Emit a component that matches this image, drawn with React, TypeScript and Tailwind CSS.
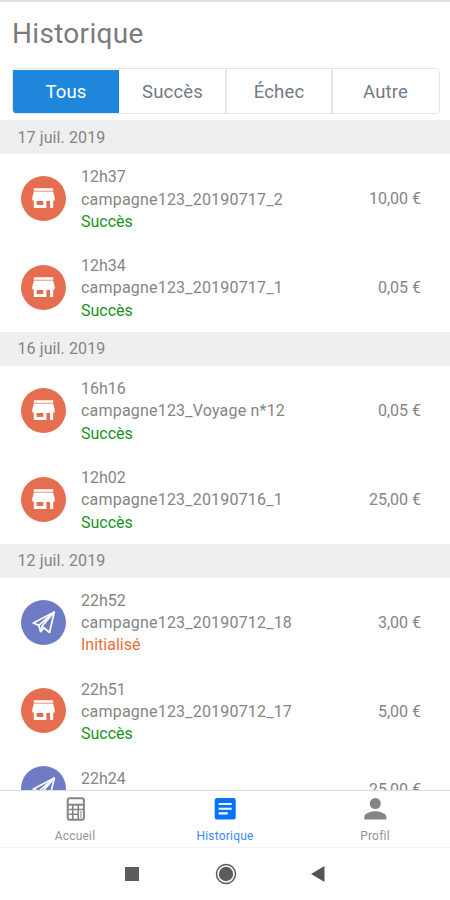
type Kind = 'store' | 'plane';
type Entry = { time: string; label?: string; status?: string; amount: string; kind: Kind };

const days: { date: string; entries: Entry[] }[] = [
  {
    date: '17 juil. 2019',
    entries: [
      { time: '12h37', label: 'campagne123_20190717_2', status: 'Succès', amount: '10,00 €', kind: 'store' },
      { time: '12h34', label: 'campagne123_20190717_1', status: 'Succès', amount: '0,05 €', kind: 'store' },
    ],
  },
  {
    date: '16 juil. 2019',
    entries: [
      { time: '16h16', label: 'campagne123_Voyage n*12', status: 'Succès', amount: '0,05 €', kind: 'store' },
      { time: '12h02', label: 'campagne123_20190716_1', status: 'Succès', amount: '25,00 €', kind: 'store' },
    ],
  },
  {
    date: '12 juil. 2019',
    entries: [
      { time: '22h52', label: 'campagne123_20190712_18', status: 'Initialisé', amount: '3,00 €', kind: 'plane' },
      { time: '22h51', label: 'campagne123_20190712_17', status: 'Succès', amount: '5,00 €', kind: 'store' },
      { time: '22h24', amount: '25,00 €', kind: 'plane' },
    ],
  },
];

const StoreIcon = () => (
  <svg viewBox="0 0 45 45" className="size-full" fill="#fff">
    <path d="M12.800 12.300h19.400v2.500H12.800z" />
    <path d="M12.800 14.800h19.400v1.200H12.800z" opacity=".45" />
    <path fillRule="evenodd" d="M12.800 16h19.400l1.500 5.500v3h-1.500v7.500h-3.200v-7h-3.600V32H12.800v-7.500h-1.500v-3zM15.600 25v4h6.700v-4z" />
  </svg>
);

const PlaneIcon = () => (
  <svg viewBox="0 0 45 45" className="size-full" fill="none" stroke="#fff" strokeWidth="1.700" strokeLinejoin="round">
    <path d="M33.300 12L12.300 23l5.500 2.400 1.800 6.200 3.600-3.600 5.300 4.500z" />
    <path d="M33.300 12L17.800 25.400M33.300 12L20.800 26.500l2.400 1.500M19.600 31.600l1.200-5.100" />
  </svg>
);

function Row({ entry }: { entry: Entry }) {
  return (
    <div className="flex items-center py-[11px] pl-[21px] pr-[29px]">
      <div className={`size-[45px] shrink-0 overflow-hidden rounded-full ${entry.kind === 'store' ? 'bg-[#e56e51]' : 'bg-[#6e7cc5]'}`}>
        {entry.kind === 'store' ? <StoreIcon /> : <PlaneIcon />}
      </div>
      <div className="-mb-[1.300px] ml-[15px] mt-[1.300px] min-h-[44.600px] flex-1 whitespace-nowrap text-[16px] leading-[22.300px]">
        <div>{entry.time}</div>
        {entry.label && <div className="tracking-[0.2px]">{entry.label}</div>}
        {entry.status && (
          <div className={entry.status === 'Initialisé' ? 'text-[#e8703a]' : 'text-[#159424]'}>{entry.status}</div>
        )}
      </div>
      <div className="-mb-px mt-px text-[16px] leading-[22px]">{entry.amount}</div>
    </div>
  );
}

export default function App() {
  return (
    <div className="flex h-[900px] w-[450px] flex-col overflow-hidden border-t-2 border-[#dedede] bg-white font-['Roboto',sans-serif] text-[#858585]">
      <header className="h-[118px] shrink-0 px-[12px] pt-[15px]">
        <h1 className="text-[28px] leading-[34px] tracking-[0.3px] text-[#7b7b7b]">Historique</h1>
        <div className="mt-[17px] flex h-[46px] w-[428px] overflow-hidden rounded-[4px] border border-[#e3e5e7] pt-px text-[18.500px] tracking-[0.15px] text-[#747a84]">
          <div className="flex w-[106px] items-center justify-center bg-[#1e87dc] pt-[3px] text-white">Tous</div>
          <div className="flex w-[106px] items-center justify-center pl-px pt-[3px]">Succès</div>
          <div className="flex w-[106px] items-center justify-center border-l-2 border-[#e3e5e7] pt-[3px]">Échec</div>
          <div className="flex flex-1 items-center justify-center border-l-2 border-[#e3e5e7] pr-px pt-[3px]">Autre</div>
        </div>
      </header>

      <main className="min-h-0 flex-1 overflow-hidden">
        {days.map((day) => (
          <section key={day.date}>
            <h2 className="flex h-[34px] items-center bg-[#efefef] pl-[17.500px] pt-px text-[16px] tracking-[0.1px]">{day.date}</h2>
            {day.entries.map((entry) => (
              <Row key={entry.time} entry={entry} />
            ))}
          </section>
        ))}
      </main>

      <nav className="grid h-[58px] shrink-0 grid-cols-3 border-b border-t border-b-[#f5f5f5] border-t-[#dcdcdc] bg-white text-[12px] leading-[16px] tracking-[0.2px] text-[#949494]">
        <div className="flex flex-col items-center pt-[5px]">
          <svg viewBox="0 0 26 26" className="size-[26px]" fill="none" stroke="#858585">
            <rect x="5.700" y="2.200" width="16.200" height="21.500" rx="2" strokeWidth="2" />
            <path d="M5.500 8.700h16.500" strokeWidth="2" />
            <path d="M10.800 9v14M16.200 9v14M6.500 13.500h15M6.500 18.300h10" strokeWidth="1.600" />
            <path d="M19 15v7" strokeWidth="1" />
          </svg>
          <span className="mt-[6px]">Accueil</span>
        </div>
        <div className="flex flex-col items-center pt-[5px] text-[#3d88ff]">
          <svg viewBox="0 0 26 26" className="size-[26px]">
            <rect x="2.700" y="2" width="21" height="21.500" rx="2" fill="#0673ff" />
            <path d="M6.700 8h13M6.700 12.700h13M6.700 17.400h9" stroke="#fff" strokeWidth="2.100" />
          </svg>
          <span className="mt-[6px]">Historique</span>
        </div>
        <div className="flex flex-col items-center pt-[5px]">
          <svg viewBox="0 0 26 26" className="size-[26px]" fill="#858585">
            <circle cx="13.300" cy="7.500" r="5.500" />
            <path d="M2.300 23.500v-2.800c0-3.600 7.300-5.500 11-5.500s11 1.900 11 5.500v2.800z" />
          </svg>
          <span className="mt-[6px]">Profil</span>
        </div>
      </nav>

      <footer className="flex h-[52px] shrink-0 items-center pl-[125px]">
        <div className="size-[14px] bg-[#5c5c5c]" />
        <svg viewBox="0 0 22 22" className="ml-[75.500px] size-[22px]">
          <circle cx="11" cy="11" r="9.500" fill="none" stroke="#5c5c5c" strokeWidth="1.500" />
          <circle cx="11" cy="11" r="7.200" fill="#5c5c5c" />
        </svg>
        <svg viewBox="0 0 14 16" className="ml-[74px] h-[16px] w-[14px]" fill="#555">
          <path d="M0 8L13.500 0v16z" />
        </svg>
      </footer>
    </div>
  );
}
